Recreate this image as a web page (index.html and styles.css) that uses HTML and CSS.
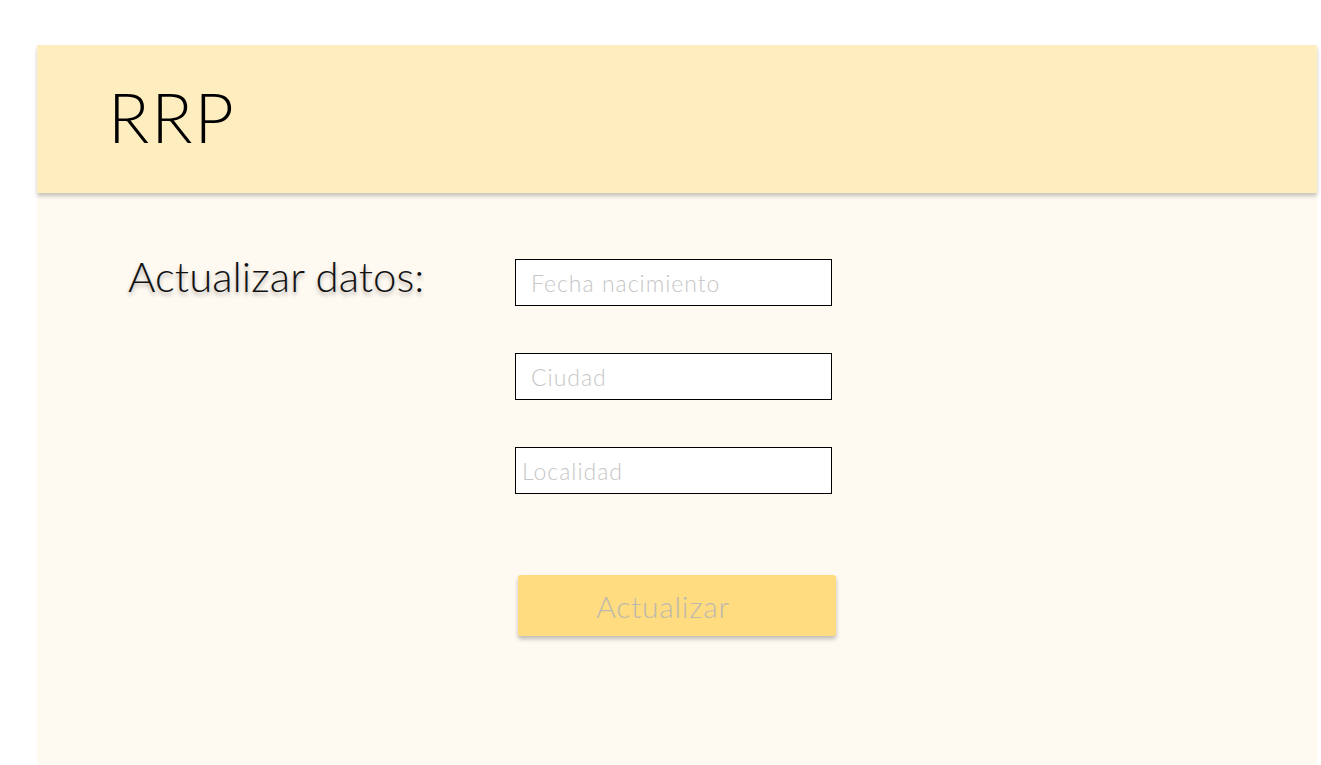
FILE: index.html
```html
<!DOCTYPE html>
<html lang="es">
<head>
<meta charset="utf-8">
<title>RRP</title>
<link rel="stylesheet" href="styles.css">
</head>
<body>
<div class="page">
  <header class="topbar">
    <div class="logo">RRP</div>
  </header>
  <main class="content">
    <h1 class="title">Actualizar datos:</h1>
    <form class="form">
      <input class="field" type="text" placeholder="Fecha nacimiento">
      <input class="field" type="text" placeholder="Ciudad">
      <input class="field field-tight" type="text" placeholder="Localidad">
      <button class="btn" type="button">Actualizar</button>
    </form>
  </main>
</div>
</body>
</html>
```

FILE: styles.css
```css
* { box-sizing: border-box; }
html, body { margin: 0; padding: 0; background: #ffffff; }
body {
  font-family: "Lato", "Open Sans", sans-serif;
  font-weight: 300;
}
.page {
  margin: 45px 4px 0 37px;
  width: 1280px;
  height: 720px;
  background: #fef9f1;
  display: flex;
  flex-direction: column;
}
.topbar {
  height: 148px;
  background: #feedbe;
  box-shadow: 0 3px 4px rgba(0, 0, 0, 0.22);
  padding: 38px 0 0 71px;
  position: relative;
  z-index: 1;
}
.logo {
  font-size: 68px;
  line-height: 1;
  font-weight: 300;
  color: #000;
  letter-spacing: 2px;
}
.content {
  display: flex;
  padding: 58px 0 0 91px;
}
.title {
  margin: 0;
  width: 387px;
  font-size: 42px;
  font-weight: 300;
  line-height: 1.2;
  color: #111;
  text-shadow: 0 3px 4px rgba(0, 0, 0, 0.3);
}
.form {
  display: flex;
  flex-direction: column;
  align-items: flex-start;
  padding-top: 8px;
}
.field {
  width: 317px;
  height: 47px;
  border: 1px solid #000;
  background: #fff;
  padding: 0 15px;
  font-family: inherit;
  font-weight: 300;
  font-size: 23px;
  letter-spacing: 1px;
  margin-bottom: 47px;
  outline: none;
}
.field-tight { padding-left: 6px; margin-bottom: 81px; }
.field::placeholder { color: #c6c6c6; }
.btn {
  margin-left: 3px;
  width: 318px;
  height: 61px;
  border: none;
  border-radius: 3px;
  background: #ffdc7f;
  box-shadow: 0 3px 4px rgba(0, 0, 0, 0.25);
  font-family: inherit;
  font-weight: 300;
  font-size: 30px;
  letter-spacing: 0.7px;
  color: #bdb9ae;
  padding: 0;
  text-indent: -28px;
  cursor: pointer;
}
```
